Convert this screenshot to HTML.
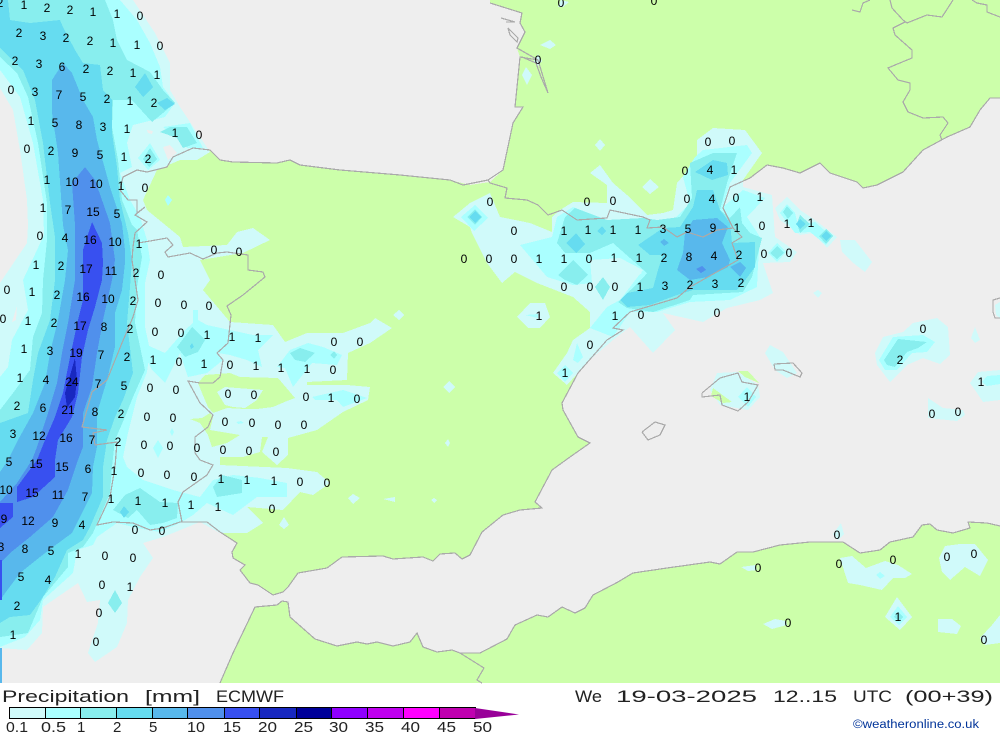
<!DOCTYPE html>
<html><head><meta charset="utf-8"><title>Precipitation ECMWF</title>
<style>
html,body{margin:0;padding:0;background:#fff;width:1000px;height:733px;overflow:hidden}
svg{display:block}
.l text{font:12px "Liberation Sans",sans-serif;fill:#000;text-anchor:middle}
.f text{font-family:"Liberation Sans",sans-serif;fill:#222}
.a{fill:#d0fafa}.b{fill:#aaffff}.c{fill:#88eeee}.d{fill:#66dcf0}.e{fill:#58b8ec}.g{fill:#5090ec}.h{fill:#3850f0}.i{fill:#1828c0}
.s{fill:#eeeeee}.n{fill:#ccffaa}
.k polyline{fill:none;stroke:#aaaaaa;stroke-width:1.2}
</style></head><body>
<svg width="1000" height="733" viewBox="0 0 1000 733" xmlns="http://www.w3.org/2000/svg">
<g shape-rendering="crispEdges">
<rect width="1000" height="683" class="s"/>
<polygon class="n" points="1000,0 490,0 490,3 522,13 520,23 525,32 517,48 520,57 515,107 523,107 513,123 503,170 490,182 470,185 450,180 400,175 340,170 300,165 290,160 277,163 233,162 220,160 210,150 193,148 173,157 167,167 147,172 137,170 123,177 120,190 128,200 135,233 133,247 132,260 138,300 133,317 122,343 107,380 92,392 82,427 95,445 117,442 115,467 110,497 97,525 113,522 133,523 150,530 163,528 180,522 200,522 207,522 220,532 237,543 232,552 233,558 245,565 240,570 250,583 258,585 273,595 283,592 288,587 298,573 327,568 342,557 383,556 393,559 423,557 433,561 440,554 455,553 462,559 470,555 482,532 503,515 520,510 542,508 535,502 552,470 570,457 590,443 578,437 563,410 562,403 578,373 607,340 623,330 613,328 630,312 677,298 690,287 738,260 732,243 742,237 723,208 730,187 750,178 767,165 800,173 820,163 830,173 857,182 863,188 877,185 903,172 923,150 947,137 970,127 980,110 990,98 1000,98"/>
<polygon class="n" points="220,683 233,653 255,607 277,605 282,601 288,602 290,617 315,639 337,646 357,642 367,644 377,642 393,646 410,642 417,633 423,647 437,652 452,650 460,653 480,653 507,639 515,625 537,615 548,617 562,607 575,613 585,608 593,595 618,582 633,573 667,568 710,562 720,564 737,552 753,552 780,545 810,542 843,542 860,553 880,550 890,542 913,537 922,525 930,524 937,530 953,533 970,528 968,522 987,523 1000,526 1000,683"/>

<!-- level 0.1 -->
<polygon class="a" points="-5,-5 133,0 155,33 170,63 170,90 180,107 210,152 197,160 180,160 157,170 143,200 147,210 180,237 183,247 227,245 237,232 253,228 270,240 243,253 200,260 210,280 203,290 230,322 273,325 285,342 307,333 343,333 370,323 375,318 392,328 370,343 348,353 347,380 307,382 307,385 347,385 370,387 368,400 343,412 317,430 288,438 288,455 277,465 262,452 268,437 262,437 260,452 243,457 220,457 220,465 287,468 317,472 330,483 313,495 300,492 283,510 247,507 263,523 247,533 220,533 200,522 173,533 163,537 143,543 153,558 140,577 128,600 127,623 117,647 95,662 88,653 98,623 100,600 87,602 78,583 43,607 42,633 27,650 0,648 -5,648"/>
<polygon class="s" points="-5,85 0,88 13,110 20,150 27,200 28,225 27,243 0,283 -5,283"/>
<polygon class="s" points="163,147 170,145 177,153 168,160"/>
<polygon class="s" points="147,130 153,131 152,134 148,133"/>
<polygon class="s" points="12,322 17,306 16,320"/>
<polygon class="n" points="198,383 205,375 230,373 240,377 278,378 295,398 287,401 273,407 257,409 245,409 227,408 213,413 208,407 202,393"/>
<polygon class="a" points="217,392 225,387 237,388 263,390 257,400 245,408 233,407 225,405"/>
<polygon class="n" points="190,419 202,418 210,413 213,417 210,430 240,435 227,443 212,447 208,435 200,423"/>
<!-- east 0.1 -->
<polygon class="a" points="453,217 470,203 490,193 500,217 530,223 552,232 552,217 560,210 573,202 607,203 607,185 590,173 600,165 613,183 627,195 647,215 663,213 673,210 677,183 697,160 697,140 713,128 745,130 762,153 743,180 743,187 772,195 775,237 797,252 790,262 763,263 773,293 760,300 727,308 703,322 663,313 675,330 653,353 630,327 613,340 593,357 587,363 567,385 553,373 567,353 573,340 590,328 590,312 573,297 537,283 515,272 502,283 487,263 472,233 470,227"/>
<polygon class="a" points="775,208 787,197 800,210 815,220 837,237 827,248 813,233 800,235 780,220"/>
<polygon class="a" points="840,240 855,240 872,262 865,272 852,262 842,252"/>
<polygon class="a" points="813,293 818,290 822,293 818,298"/>
<polygon class="a" points="642,187 650,179 659,187 650,194"/>
<polygon class="a" points="595,145 600,139 605,145 600,151"/>
<polygon class="a" points="540,45 550,40 556,45 550,49"/>
<polygon class="a" points="522,75 526,67 532,75 527,85"/>
<polygon class="a" points="561,0 569,2 563,7 558,7"/>
<polygon class="a" points="534,61 538,54 542,61 538,66"/>
<polygon class="a" points="517,317 530,303 545,303 550,317 540,328 528,328"/>
<polygon class="a" points="443,387 449,381 455,387 449,393"/>
<polygon class="a" points="393,315 399,310 404,315 399,320"/>
<polygon class="a" points="348,498 353,494 360,498 353,504"/>
<polygon class="a" points="383,499 395,497 395,502"/>
<polygon class="a" points="431,500 434,498 437,500 434,503"/>
<polygon class="a" points="445,443 448,439 450,443 448,447"/>
<polygon class="a" points="279,525 284,517 289,525 284,529"/>
<polygon class="a" points="717,373 738,372 758,385 760,397 748,410 720,405 710,390"/>
<polygon class="n" points="711,396 713,388 732,402 723,403"/>
<polygon class="n" points="738,371 748,371 759,383 745,377"/>
<polygon class="b" points="738,397 747,387 756,397 748,407"/>
<polygon class="a" points="765,353 770,345 783,352 797,373 787,378 775,370"/>
<polygon class="a" points="875,353 883,337 903,332 913,323 937,318 948,327 950,355 940,364 923,358 907,365 890,382 877,365"/>
<polygon class="b" points="879,360 893,337 923,335 935,342 927,352 912,353 897,370 885,370"/>
<polygon class="c" points="884,360 898,339 927,342 918,348 907,352 895,367 887,365"/>
<polygon class="a" points="970,383 978,372 1000,370 1000,400 983,402 977,393"/>
<polygon class="b" points="982,382 987,376 1000,375 1000,384 987,386"/>
<polygon class="a" points="928,398 943,408 963,410 965,415 957,421 928,418"/>
<polygon class="a" points="975,327 980,340 975,343 971,338"/>
<polygon class="a" points="841,523 844,534 838,540 833,534"/>
<polygon class="a" points="741,567 755,565 757,570 748,571"/>
<polygon class="a" points="840,558 852,556 866,568 885,561 898,565 912,574 905,578 893,578 882,590 860,585 848,583"/>
<polygon class="b" points="876,575 880,572 885,576 880,579"/>
<polygon class="a" points="939,558 945,546 960,544 975,544 988,560 980,576 965,567 950,580 942,572"/>
<polygon class="a" points="885,617 897,597 912,617 900,630"/>
<polygon class="b" points="890,617 898,606 907,617 899,625"/>
<polygon class="c" points="894,617 898,612 903,617 899,621"/>
<polygon class="a" points="763,624 775,619 786,621 787,625 772,629"/>
<polygon class="a" points="938,619 952,619 961,626 957,634 938,632"/>
<polygon class="a" points="980,638 992,625 1000,615 1000,643 985,645"/>
<polygon class="a" points="995,305 1000,302 1000,318 996,315"/>

<!-- level 0.5 -->
<polygon class="b" points="-5,-5 120,0 137,20 150,43 160,67 163,87 175,103 165,117 133,125 127,143 132,167 120,173 130,200 140,217 147,240 150,260 145,283 145,327 150,350 147,372 137,397 128,433 123,457 127,467 143,480 173,490 200,497 213,480 233,475 260,478 287,483 287,497 257,497 233,515 207,503 193,515 180,523 160,532 137,528 117,523 97,537 93,545 77,550 73,573 43,600 40,620 25,637 0,647 -5,647 -5,377 0,377 8,367 12,340 28,310 23,280 30,265 44,235 43,200 33,143 20,97 0,70 -5,70"/>
<polygon class="b" points="147,345 165,353 185,330 193,323 193,310 198,310 198,320 207,325 230,330 253,335 273,335 258,350 262,367 247,360 230,355 218,353 223,360 207,373 188,377 180,353 165,383 152,370 147,360"/>
<polygon class="b" points="277,367 290,350 308,343 323,347 342,355 337,365 312,363 293,387 285,368"/>
<polygon class="b" points="312,397 343,390 367,398 343,407 337,400 315,400"/>
<polygon class="b" points="163,127 190,123 203,148 187,148 177,137"/>
<polygon class="b" points="138,158 150,143 160,160 148,170"/>
<polygon class="b" points="165,200 168,195 172,200 168,206"/>
<polygon class="b" points="153,448 158,440 163,448 158,458"/>
<polygon class="b" points="170,432 172,428 174,432 172,436"/>
<polygon class="b" points="236,422 241,421 244,423 238,424"/>
<!-- east 0.5 -->
<polygon class="b" points="520,245 552,237 557,217 573,207 607,220 647,223 673,220 690,203 683,177 695,157 703,150 747,145 752,153 730,183 723,207 743,190 765,198 747,217 760,237 758,265 757,287 730,300 690,302 657,312 630,312 613,337 590,328 607,307 620,300 643,270 620,258 590,260 592,283 573,285 547,277"/>
<polygon class="a" points="593,260 620,258 642,273 627,283 592,283"/>
<polygon class="b" points="461,217 475,205 488,218 474,231"/>
<polygon class="b" points="573,360 577,343 583,357 578,363"/>
<polygon class="b" points="557,373 565,365 573,373 565,382"/>
<polygon class="b" points="780,213 787,204 795,213 798,225 815,222 832,237 826,245 810,232 795,233"/>
<polygon class="b" points="768,253 777,243 786,252 777,262"/>
<polygon class="b" points="525,315 538,314 538,318"/>

<!-- level 1 -->
<polygon class="c" points="-5,-5 105,0 113,20 117,40 127,60 150,72 163,90 175,103 163,113 152,122 132,100 113,100 112,127 118,160 122,200 132,225 137,230 142,257 137,287 135,323 145,370 133,397 125,417 115,440 112,467 110,493 93,533 83,547 68,553 68,567 43,597 28,633 0,637 -5,637 -5,410 0,410 13,393 30,370 33,337 42,313 43,280 47,240 47,203 38,143 28,97 17,73 0,57 -5,57"/>
<polygon class="c" points="177,347 192,327 205,340 198,352 185,357"/>
<polygon class="c" points="213,487 222,475 242,480 242,493 217,497"/>
<polygon class="c" points="113,510 125,495 140,488 160,502 178,503 177,518 163,523 150,525 137,510 128,518"/>
<polygon class="c" points="160,132 170,127 187,127 197,143 183,148 177,138"/>
<polygon class="c" points="143,159 150,148 157,159 149,167"/>
<polygon class="c" points="290,353 300,348 315,353 305,362 295,360"/>
<polygon class="c" points="330,355 334,351 337,355 334,359"/>
<polygon class="b" points="338,398 345,392 353,398 345,405"/>
<polygon class="c" points="108,603 115,590 122,603 115,613"/>
<!-- east 1 -->
<polygon class="c" points="557,243 565,217 575,208 607,220 643,218 657,220 680,217 692,198 690,163 713,153 737,153 727,183 720,210 730,218 740,207 742,223 750,233 762,238 752,277 743,292 693,295 690,300 653,312 627,308 618,302 643,278 647,273 613,243 590,253 565,253"/>
<polygon class="c" points="558,275 573,260 588,275 577,285 565,280"/>
<polygon class="c" points="595,287 603,277 610,287 603,300"/>
<polygon class="c" points="467,217 475,209 482,217 475,225"/>
<polygon class="c" points="783,212 787,206 793,213 788,219"/>
<polygon class="c" points="797,223 800,215 810,224 800,233"/>
<polygon class="c" points="819,236 826,229 833,236 826,244"/>
<polygon class="c" points="770,253 777,246 784,253 777,259"/>
<!-- level 2 -->
<polygon class="d" points="-5,-5 8,0 10,20 30,23 60,20 63,27 75,50 83,63 100,65 103,90 112,100 112,133 117,167 120,200 128,233 132,260 130,287 127,323 133,373 123,400 115,417 107,440 103,467 103,497 90,527 83,540 67,550 55,577 43,597 30,615 10,617 0,623 -5,623 -5,423 0,423 28,413 33,380 38,353 50,320 55,280 55,237 50,203 43,143 35,100 23,70 0,48 -5,48"/>
<polygon class="d" points="135,87 145,73 153,87 143,97"/>
<polygon class="d" points="157,103 167,98 175,104 165,110"/>
<polygon class="d" points="190,346 192,343 194,347 191,349"/>
<polygon class="d" points="120,512 124,506 129,512 124,518"/>
<polygon class="d" points="638,245 663,228 680,227 693,207 697,190 713,190 720,210 730,223 732,243 755,242 755,267 743,283 737,290 693,290 677,295 650,305 627,307 620,300 627,293 653,288 658,270 663,255 650,255"/>
<polygon class="d" points="695,172 713,160 727,163 728,175 712,180"/>
<polygon class="d" points="566,243 576,233 585,244 576,253"/>
<polygon class="d" points="597,231 602,226 606,231 602,235"/>
<polygon class="d" points="469,217 475,211 481,217 475,223"/>
<polygon class="d" points="796,224 800,219 806,224 800,229"/>
<polygon class="d" points="821,236 826,231 831,236 826,241"/>
<!-- level 5 -->
<polygon class="e" points="63,63 72,73 83,100 93,117 97,140 110,187 122,223 125,250 125,263 122,290 115,313 115,347 107,380 97,413 97,447 93,467 92,493 80,517 72,533 53,547 40,557 20,573 0,600 -5,600 -5,475 0,472 8,460 18,440 33,413 45,383 50,353 58,320 65,280 68,250 63,225 58,153 52,113 52,80"/>
<polygon class="e" points="683,253 685,233 693,220 717,218 728,227 722,243 730,260 728,267 708,277 690,280 677,270"/>
<polygon class="e" points="730,267 740,262 746,268 740,277"/>
<polygon class="e" points="660,242 664,239 669,243 664,246"/>
<!-- level 10 -->
<polygon class="g" points="85,167 95,180 110,223 115,260 112,280 103,320 97,353 92,387 83,413 83,447 78,460 68,490 53,517 30,537 10,553 0,563 -5,563 -5,502 0,502 17,483 32,460 37,447 48,413 57,383 62,353 68,323 75,280 75,257 75,225 72,183"/>
<polygon class="g" points="696,269 702,266 706,270 701,273"/>
<!-- level 15 -->
<polygon class="h" points="92,222 102,243 103,263 102,280 95,307 88,330 82,357 78,393 72,417 58,440 55,460 55,477 33,497 17,502 17,487 37,460 45,440 55,417 63,393 70,357 78,320 83,300 83,250"/>
<polygon class="h" points="-5,503 13,503 13,517 0,528 -5,528"/>
<rect x="0" y="560" width="2" height="40" class="h"/>
<rect x="0" y="648" width="2" height="35" class="e"/>
<!-- level 20 -->
<polygon class="i" points="75,358 77,380 75,397 67,408 65,393"/>

<g class="k">
<polyline points="450,180 463,185 488,180 503,170 513,123 523,107 515,107 520,57 538,60 548,93 541,77 536,63 522,57"/>
<polyline points="490,3 522,13 520,23 525,32 517,48 538,60"/>
<polyline points="501,18 515,22 506,22"/>
<polyline points="508,28 518,38 517,42 510,35 508,28"/>
<polyline points="852,10 860,12 863,3 870,0"/>
<polyline points="450,180 400,175 340,170 300,165 290,160 277,163 233,162 220,160 210,150 193,148 173,157 167,167 147,172 137,170 123,177 120,190 128,200 137,200 137,213 145,207 135,215 147,222 135,233 133,247 132,260 138,300 133,317 122,343 107,380 92,392 82,427 107,430 93,433 95,445 117,442 115,467 110,497 97,525 113,522 133,523 150,530 163,528 180,522 200,522 207,522 220,532 237,543 232,552 233,558 245,565 240,570 250,583 258,585 273,595 283,592 288,587 298,573 327,568 342,557 383,556 393,559 423,557 433,561 440,554 455,553 462,559 470,555 482,532 503,515 520,510 542,508 535,502 552,470 570,457 590,443 578,437 563,410 562,403 578,373 607,340 623,330 613,328 630,312 677,298 690,287 738,260 732,243 742,237 733,228 723,208 730,187 750,178 767,165 783,168 800,173 820,163 830,173 857,182 863,188 877,185 903,172 923,150 947,137 970,127 980,110 990,98 1000,98"/>
<polyline points="220,683 233,653 255,607 277,605 282,601 288,602 290,617 315,639 337,646 357,642 367,644 377,642 393,646 410,642 417,633 423,647 437,652 452,650 460,653 480,653 507,639 515,625 537,615 548,617 562,607 575,613 585,608 593,595 618,582 633,573 667,568 710,562 720,564 737,552 753,552 780,545 810,542 843,542 860,553 880,550 890,542 913,537 922,525 930,524 937,530 953,533 970,528 968,522 987,523 1000,526"/>
<polyline points="460,653 484,668 477,680 482,683"/>
<polyline points="138,243 150,241 167,238 173,245 165,252 168,257 190,253 203,259 217,253 227,252 248,255 248,270 263,272 265,277 243,295 227,306 231,315 228,343 217,353 223,360 220,377 213,383 200,383 188,381 200,403 213,415 208,427 195,437 195,453 200,460 213,465 207,475 183,492 178,502 182,522"/>
<polyline points="488,180 490,183 507,188 505,198 527,200 538,205 548,215 562,210 577,220 607,218 610,210 643,217 650,220 647,228 663,227 677,237 687,232 703,237 717,230 733,228"/>
<polyline points="890,0 892,8 903,20 907,23 927,15 942,17 953,0"/>
<polyline points="905,22 893,28 895,35 912,50 912,58 895,65 888,68 898,80 910,83 910,90 903,102 908,112 923,118 943,117 948,123 940,135 942,140"/>
<polyline points="972,0 977,3 987,5 987,12 1000,17"/>
<polyline points="702,393 720,378 738,373 742,382 758,385 748,402 738,411 722,405 720,395 702,397 702,393"/>
<polyline points="774,364 793,363 802,373 800,377 783,370 775,370 774,364"/>
<polyline points="642,432 655,422 665,425 660,435 648,440 642,432"/>
<polyline points="1000,298 993,300 993,312 995,318 1000,318"/>
</g>
</g>

<g class="l">
<text x="0" y="7">2</text><text x="24" y="9">1</text><text x="47" y="12">2</text><text x="70" y="14">2</text><text x="93" y="16">1</text><text x="117" y="18">1</text><text x="140" y="20">0</text>
<text x="19" y="37">2</text><text x="43" y="40">3</text><text x="66" y="42">2</text><text x="90" y="45">2</text><text x="113" y="47">1</text><text x="137" y="49">1</text><text x="160" y="50">0</text>
<text x="15" y="65">2</text><text x="39" y="68">3</text><text x="62" y="71">6</text><text x="86" y="73">2</text><text x="110" y="75">2</text><text x="133" y="77">1</text><text x="157" y="79">1</text>
<text x="11" y="94">0</text><text x="35" y="96">3</text><text x="59" y="99">7</text><text x="83" y="101">5</text><text x="107" y="103">2</text><text x="130" y="105">1</text><text x="154" y="107">2</text>
<text x="31" y="125">1</text><text x="55" y="127">5</text><text x="79" y="129">8</text><text x="103" y="131">3</text><text x="127" y="133">1</text><text x="175" y="137">1</text><text x="199" y="139">0</text>
<text x="27" y="153">0</text><text x="51" y="155">2</text><text x="75" y="157">9</text><text x="100" y="159">5</text><text x="124" y="161">1</text><text x="148" y="163">2</text>
<text x="47" y="184">1</text><text x="72" y="186">10</text><text x="96" y="188">10</text><text x="121" y="190">1</text><text x="145" y="192">0</text>
<text x="43" y="212">1</text><text x="68" y="214">7</text><text x="93" y="216">15</text><text x="117" y="218">5</text>
<text x="40" y="240">0</text><text x="65" y="242">4</text><text x="90" y="244">16</text><text x="115" y="246">10</text><text x="139" y="248">1</text><text x="214" y="254">0</text><text x="239" y="256">0</text>
<text x="36" y="269">1</text><text x="61" y="270">2</text><text x="86" y="273">17</text><text x="111" y="275">11</text><text x="136" y="277">2</text><text x="161" y="279">0</text>
<text x="7" y="294">0</text><text x="32" y="296">1</text><text x="57" y="299">2</text><text x="83" y="301">16</text><text x="108" y="303">10</text><text x="133" y="305">2</text><text x="158" y="307">0</text><text x="184" y="309">0</text><text x="209" y="310">0</text>
<text x="3" y="323">0</text><text x="28" y="325">1</text><text x="54" y="327">2</text><text x="80" y="330">17</text><text x="104" y="331">8</text><text x="130" y="333">2</text><text x="155" y="336">0</text><text x="181" y="337">0</text><text x="207" y="339">1</text><text x="232" y="341">1</text><text x="258" y="342">1</text><text x="334" y="346">0</text><text x="360" y="346">0</text>
<text x="24" y="353">1</text><text x="50" y="355">3</text><text x="76" y="357">19</text><text x="101" y="359">7</text><text x="127" y="361">2</text><text x="153" y="364">1</text><text x="179" y="366">0</text><text x="204" y="368">1</text><text x="230" y="369">0</text><text x="256" y="370">1</text><text x="281" y="372">1</text><text x="307" y="373">1</text><text x="333" y="374">0</text>
<text x="20" y="382">1</text><text x="46" y="384">4</text><text x="72" y="386">24</text><text x="98" y="388">7</text><text x="124" y="390">5</text><text x="150" y="392">0</text><text x="176" y="394">0</text><text x="228" y="398">0</text><text x="254" y="399">0</text><text x="306" y="401">0</text><text x="331" y="402">1</text><text x="357" y="403">0</text>
<text x="17" y="410">2</text><text x="43" y="412">6</text><text x="68" y="414">21</text><text x="95" y="416">8</text><text x="121" y="418">2</text><text x="147" y="421">0</text><text x="173" y="422">0</text><text x="225" y="426">0</text><text x="252" y="427">0</text><text x="278" y="429">0</text><text x="304" y="429">0</text>
<text x="13" y="438">3</text><text x="39" y="440">12</text><text x="66" y="442">16</text><text x="92" y="444">7</text><text x="118" y="446">2</text><text x="144" y="449">0</text><text x="170" y="450">0</text><text x="197" y="452">0</text><text x="223" y="454">0</text><text x="249" y="455">0</text><text x="276" y="456">0</text>
<text x="9" y="466">5</text><text x="36" y="468">15</text><text x="62" y="471">15</text><text x="88" y="473">6</text><text x="114" y="475">1</text><text x="141" y="477">0</text><text x="167" y="479">0</text><text x="194" y="481">0</text><text x="221" y="483">1</text><text x="247" y="484">1</text><text x="274" y="485">1</text><text x="300" y="486">0</text><text x="327" y="487">0</text>
<text x="6" y="494">10</text><text x="32" y="497">15</text><text x="58" y="499">11</text><text x="85" y="501">7</text><text x="111" y="503">1</text><text x="138" y="505">1</text><text x="165" y="507">1</text><text x="191" y="509">1</text><text x="218" y="511">1</text><text x="272" y="513">0</text>
<text x="4" y="523">9</text><text x="28" y="525">12</text><text x="55" y="527">9</text><text x="82" y="529">4</text><text x="135" y="534">0</text><text x="162" y="535">0</text>
<text x="1" y="551">3</text><text x="25" y="553">8</text><text x="51" y="555">5</text><text x="78" y="558">1</text><text x="105" y="560">0</text><text x="133" y="562">0</text>
<text x="21" y="581">5</text><text x="48" y="584">4</text><text x="102" y="589">0</text><text x="130" y="591">1</text>
<text x="17" y="610">2</text><text x="99" y="617">0</text><text x="13" y="639">1</text><text x="96" y="646">0</text>
<text x="561" y="7">0</text><text x="654" y="5">0</text><text x="538" y="64">0</text>
<text x="708" y="146">0</text><text x="732" y="145">0</text><text x="685" y="175">0</text><text x="710" y="174">4</text><text x="734" y="174">1</text>
<text x="490" y="206">0</text><text x="587" y="206">0</text><text x="613" y="205">0</text><text x="687" y="203">0</text><text x="712" y="203">4</text><text x="736" y="202">0</text><text x="760" y="201">1</text>
<text x="514" y="235">0</text><text x="564" y="235">1</text><text x="588" y="234">1</text><text x="613" y="234">1</text><text x="638" y="234">1</text><text x="663" y="233">3</text><text x="688" y="233">5</text><text x="713" y="232">9</text><text x="737" y="232">1</text><text x="762" y="230">0</text><text x="787" y="228">1</text><text x="811" y="227">1</text>
<text x="464" y="263">0</text><text x="489" y="263">0</text><text x="514" y="263">0</text><text x="539" y="263">1</text><text x="564" y="263">1</text><text x="589" y="263">0</text><text x="614" y="262">1</text><text x="639" y="262">1</text><text x="664" y="262">2</text><text x="689" y="261">8</text><text x="714" y="260">4</text><text x="739" y="259">2</text><text x="764" y="258">0</text><text x="789" y="257">0</text>
<text x="564" y="291">0</text><text x="590" y="291">0</text><text x="615" y="291">0</text><text x="640" y="291">1</text><text x="665" y="290">3</text><text x="690" y="289">2</text><text x="715" y="288">3</text><text x="741" y="287">2</text>
<text x="539" y="320">1</text><text x="615" y="320">1</text><text x="641" y="319">0</text><text x="717" y="317">0</text>
<text x="590" y="349">0</text><text x="565" y="377">1</text><text x="747" y="401">1</text><text x="923" y="333">0</text><text x="900" y="364">2</text><text x="981" y="386">1</text><text x="932" y="418">0</text><text x="958" y="416">0</text>
<text x="837" y="539">0</text><text x="758" y="572">0</text><text x="839" y="568">0</text><text x="893" y="564">0</text><text x="947" y="561">0</text><text x="974" y="558">0</text><text x="898" y="621">1</text><text x="788" y="627">0</text><text x="984" y="644">0</text>
</g>

<g shape-rendering="crispEdges" stroke="#000" stroke-width="1">
<rect x="9.5" y="707.5" width="36" height="11" fill="#d0fafa"/>
<rect x="45.5" y="707.5" width="35" height="11" fill="#aaffff"/>
<rect x="80.5" y="707.5" width="36" height="11" fill="#88eeee"/>
<rect x="116.5" y="707.5" width="36" height="11" fill="#66dcf0"/>
<rect x="152.5" y="707.5" width="35" height="11" fill="#58b8ec"/>
<rect x="187.5" y="707.5" width="37" height="11" fill="#5090ec"/>
<rect x="224.5" y="707.5" width="35" height="11" fill="#3850f0"/>
<rect x="259.5" y="707.5" width="37" height="11" fill="#1828c0"/>
<rect x="296.5" y="707.5" width="35" height="11" fill="#000099"/>
<rect x="331.5" y="707.5" width="36" height="11" fill="#9000ff"/>
<rect x="367.5" y="707.5" width="36" height="11" fill="#c000f0"/>
<rect x="403.5" y="707.5" width="36" height="11" fill="#ff00ff"/>
<rect x="439.5" y="707.5" width="36" height="11" fill="#c000b0"/>
</g>
<polygon points="475,708 519,714.5 475,719" fill="#990099"/>

<g class="f">
<text x="2" y="702" font-size="17" textLength="127" lengthAdjust="spacingAndGlyphs">Precipitation</text>
<text x="145" y="702" font-size="17" textLength="55" lengthAdjust="spacingAndGlyphs">[mm]</text>
<text x="216" y="702" font-size="17" textLength="68" lengthAdjust="spacingAndGlyphs">ECMWF</text>
<text x="575" y="702" font-size="17" textLength="27" lengthAdjust="spacingAndGlyphs">We</text>
<text x="616" y="702" font-size="17" textLength="141" lengthAdjust="spacingAndGlyphs">19-03-2025</text>
<text x="773" y="702" font-size="17" textLength="64" lengthAdjust="spacingAndGlyphs">12..15</text>
<text x="853" y="702" font-size="17" textLength="39" lengthAdjust="spacingAndGlyphs">UTC</text>
<text x="905" y="702" font-size="17" textLength="88" lengthAdjust="spacingAndGlyphs">(00+39)</text>
<text x="6" y="732" font-size="15" textLength="22" lengthAdjust="spacingAndGlyphs">0.1</text>
<text x="41" y="732" font-size="15" textLength="25" lengthAdjust="spacingAndGlyphs">0.5</text>
<text x="77" y="732" font-size="15">1</text>
<text x="113" y="732" font-size="15">2</text>
<text x="149" y="732" font-size="15">5</text>
<text x="187" y="732" font-size="15" textLength="18" lengthAdjust="spacingAndGlyphs">10</text>
<text x="223" y="732" font-size="15" textLength="18" lengthAdjust="spacingAndGlyphs">15</text>
<text x="258" y="732" font-size="15" textLength="19" lengthAdjust="spacingAndGlyphs">20</text>
<text x="294" y="732" font-size="15" textLength="19" lengthAdjust="spacingAndGlyphs">25</text>
<text x="329" y="732" font-size="15" textLength="19" lengthAdjust="spacingAndGlyphs">30</text>
<text x="365" y="732" font-size="15" textLength="19" lengthAdjust="spacingAndGlyphs">35</text>
<text x="401" y="732" font-size="15" textLength="19" lengthAdjust="spacingAndGlyphs">40</text>
<text x="437" y="732" font-size="15" textLength="19" lengthAdjust="spacingAndGlyphs">45</text>
<text x="473" y="732" font-size="15" textLength="19" lengthAdjust="spacingAndGlyphs">50</text>
<text x="853" y="728" font-size="11.5" style="fill:#003399" textLength="126" lengthAdjust="spacingAndGlyphs">©weatheronline.co.uk</text>
</g>
</svg>
</body></html>
